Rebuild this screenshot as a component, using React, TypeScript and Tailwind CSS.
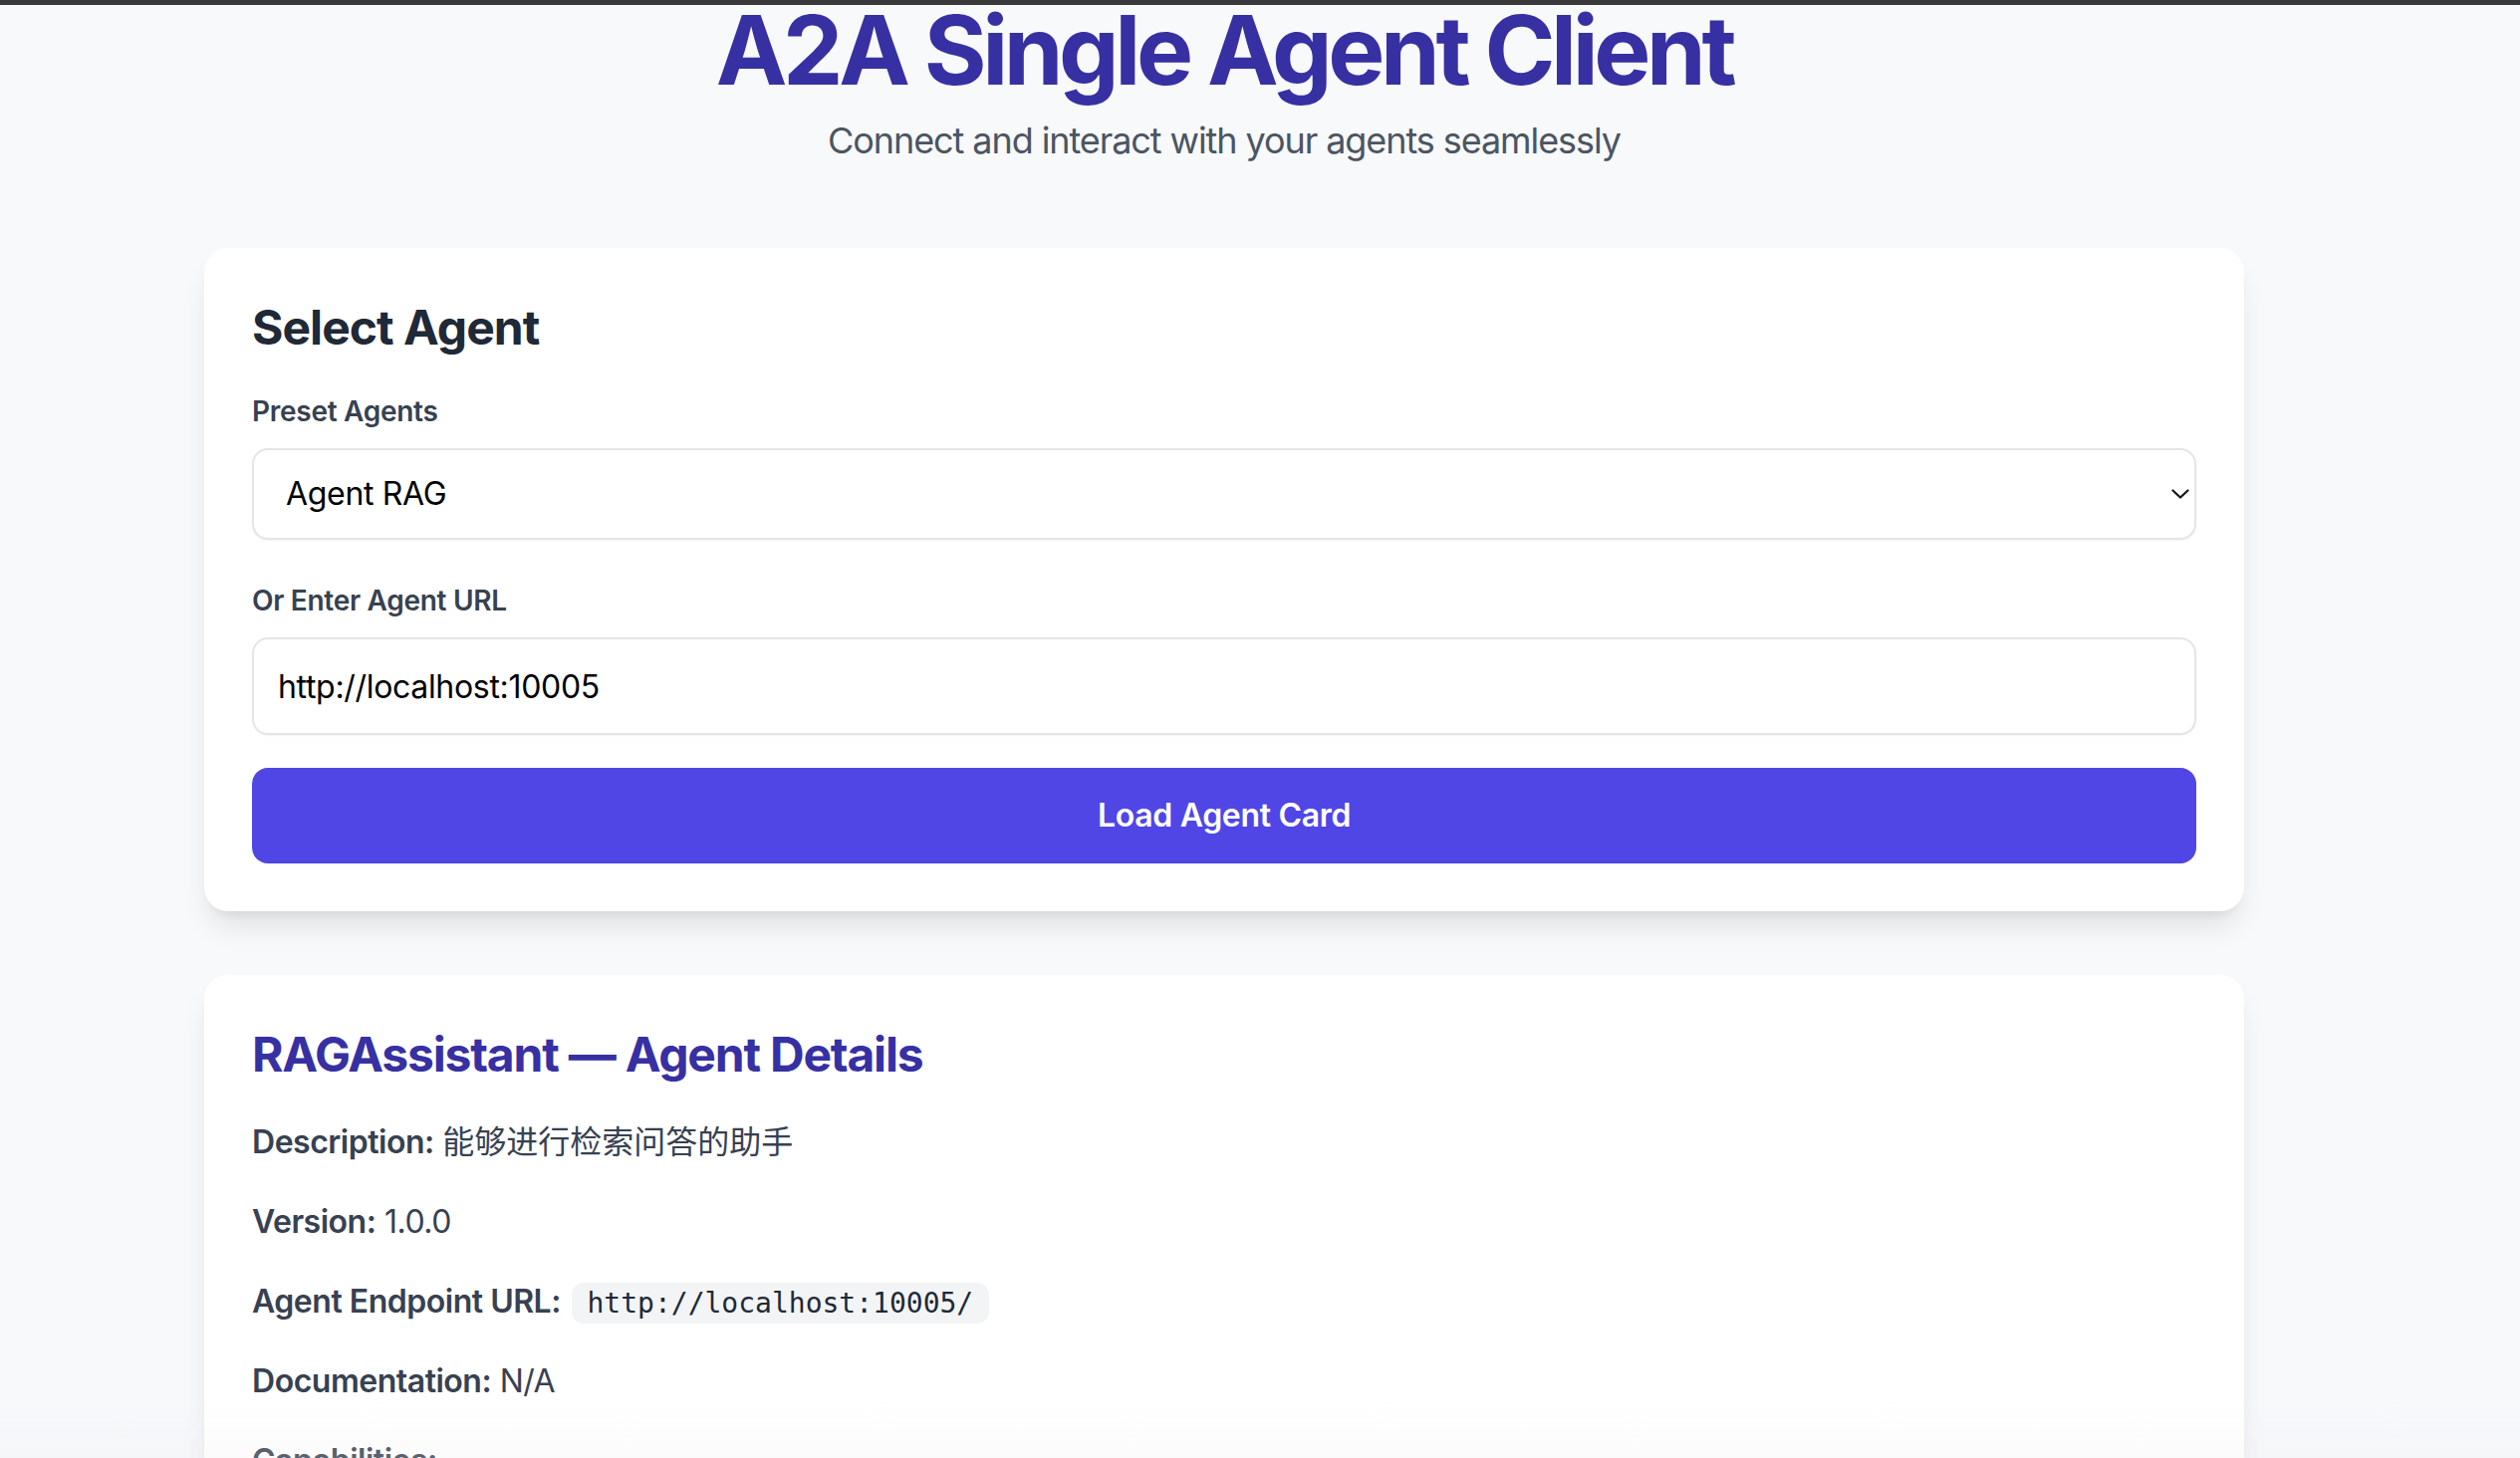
import React, { useState } from 'react';

const presetAgents = [
  { name: 'Agent RAG', url: 'http://localhost:10005' },
  { name: 'Agent Search', url: 'http://localhost:10006' },
  { name: 'Agent Writer', url: 'http://localhost:10007' },
];

const agentCard = {
  name: 'RAGAssistant',
  description: '能够进行检索问答的助手',
  version: '1.0.0',
  url: 'http://localhost:10005/',
  documentationUrl: 'N/A',
  capabilities: ['Streaming: Yes', 'Push Notifications: No', 'State Transition History: No'],
};

const ChevronDown = () => (
  <svg width="18" height="10" viewBox="0 0 18 10" fill="none">
    <path d="M1.5 1.5 L9 8.5 L16.5 1.5" stroke="#151515" strokeWidth="2.2" strokeLinecap="round" strokeLinejoin="round" />
  </svg>
);

const App = () => {
  const [selected, setSelected] = useState('Agent RAG');
  const [agentUrl, setAgentUrl] = useState('http://localhost:10005');

  const onPresetChange = (name: string) => {
    setSelected(name);
    const preset = presetAgents.find((a) => a.name === name);
    if (preset) setAgentUrl(preset.url);
  };

  return (
    <div className="relative min-h-screen bg-[#f8f9fb] pr-[72px] font-[Inter,'Noto_Sans_CJK_SC',sans-serif]">
      {/* browser edge */}
      <div className="absolute top-0 left-0 right-0 h-[5px] bg-[#393939]" />

      <div className="max-w-[2048px] mx-auto pt-[2px]">
        {/* Header */}
        <div className="text-center mb-[80px]">
          <h1 className="text-[96px] leading-[96px] font-bold tracking-[-0.046em] text-[#3730a3]">A2A Single Agent Client</h1>
          <p className="mt-[15px] text-[36px] leading-[56px] tracking-[-0.03em] text-[#4b5563]">Connect and interact with your agents seamlessly</p>
        </div>

        {/* Select Agent */}
        <div className="bg-white rounded-[24px] p-[48px] shadow-[0_20px_30px_-6px_rgba(0,0,0,0.1),0_8px_12px_-8px_rgba(0,0,0,0.1)] mb-[64px]">
          <h2 className="text-[48px] leading-[64px] font-bold tracking-[-0.02em] text-[#1f2937] mb-[32px]">Select Agent</h2>

          <label className="block text-[28px] leading-[40px] font-semibold tracking-[-0.01em] text-[#374151] mb-[17px]">Preset Agents</label>
          <div className="relative">
            <select
              value={selected}
              onChange={(e) => onPresetChange(e.target.value)}
              className="w-full h-[92px] appearance-none bg-white border-2 border-[#e4e5ea] rounded-[16px] pl-[32px] pr-[48px] text-[32px] leading-[48px] tracking-[-0.01em] text-black shadow-[0_1px_2px_rgba(0,0,0,0.05)] outline-none"
            >
              {presetAgents.map((a) => (
                <option key={a.name} value={a.name}>{a.name}</option>
              ))}
            </select>
            <div className="absolute right-[7px] top-[41px] pointer-events-none">
              <ChevronDown />
            </div>
          </div>

          <label className="block mt-[41px] text-[28px] leading-[40px] font-semibold tracking-[-0.01em] text-[#374151] mb-[17px]">Or Enter Agent URL</label>
          <input
            value={agentUrl}
            onChange={(e) => setAgentUrl(e.target.value)}
            className="w-full h-[98px] bg-white border-2 border-[#e4e5ea] rounded-[16px] px-[24px] text-[32px] leading-[48px] tracking-[-0.01em] text-black shadow-[0_1px_2px_rgba(0,0,0,0.05)] outline-none"
          />

          <button className="mt-[33px] w-full h-[96px] bg-[#4f46e5] hover:bg-[#4338ca] rounded-[16px] text-white text-[32px] leading-[48px] font-semibold tracking-[-0.01em]">
            Load Agent Card
          </button>
        </div>

        {/* Agent Details */}
        <div className="bg-white rounded-[24px] p-[48px] shadow-[0_20px_30px_-6px_rgba(0,0,0,0.1),0_8px_12px_-8px_rgba(0,0,0,0.1)] mb-[64px]">
          <h2 className="text-[48px] leading-[64px] font-bold tracking-[-0.025em] text-[#3730a3] mb-[32px]">{agentCard.name} — Agent Details</h2>
          <div className="flex flex-col gap-[32px] text-[32px] leading-[48px] tracking-[-0.015em] text-[#374151]">
            <p><strong className="font-semibold">Description:</strong> <span className="tracking-normal">{agentCard.description}</span></p>
            <p><strong className="font-semibold">Version:</strong> {agentCard.version}</p>
            <p>
              <strong className="font-semibold">Agent Endpoint URL:</strong>{' '}
              <code className="ml-[2px] bg-[#f3f4f6] rounded-[12px] px-[16px] py-[4px] text-[28px] leading-[40px] tracking-normal text-[#1f2937] font-['DejaVu_Sans_Mono',monospace]">{agentCard.url}</code>
            </p>
            <p><strong className="font-semibold">Documentation:</strong> {agentCard.documentationUrl}</p>
            <div>
              <p><strong className="font-semibold">Capabilities:</strong></p>
              <ul className="mt-[16px] pl-[48px] list-disc flex flex-col gap-[8px]">
                {agentCard.capabilities.map((c) => (
                  <li key={c}>{c}</li>
                ))}
              </ul>
            </div>
          </div>
        </div>
      </div>

      {/* bottom fade */}
      <div className="fixed bottom-0 left-0 right-0 h-[60px] bg-linear-to-b from-transparent to-[rgba(236,237,241,0.2)] pointer-events-none" />
    </div>
  );
};

export default App;
